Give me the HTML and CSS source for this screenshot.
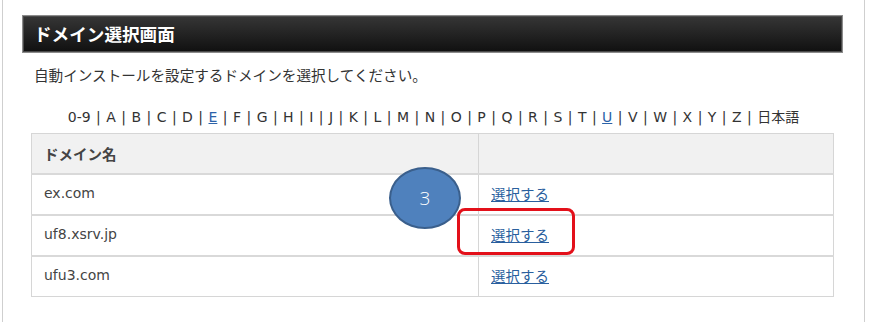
FILE: index.html
```html
<!DOCTYPE html>
<html lang="ja">
<head>
<meta charset="utf-8">
<title>ドメイン選択画面</title>
<link rel="stylesheet" href="styles.css">
</head>
<body>
<div class="panel">
  <h2 class="title-bar">ドメイン選択画面</h2>
  <p class="lead">自動インストールを設定するドメインを選択してください。</p>
  <p class="index">0-9 | A | B | C | D | <a href="#">E</a> | F | G | H | I | J | K | L | M | N | O | P | Q | R | S | T | <a href="#">U</a> | V | W | X | Y | Z | 日本語</p>
  <table class="domains">
    <thead>
      <tr><th class="col-name">ドメイン名</th><th></th></tr>
    </thead>
    <tbody>
      <tr><td>ex.com</td><td><a href="#">選択する</a></td></tr>
      <tr><td>uf8.xsrv.jp</td><td><a href="#">選択する</a></td></tr>
      <tr><td>ufu3.com</td><td><a href="#">選択する</a></td></tr>
    </tbody>
  </table>
  <div class="badge">3</div>
  <div class="highlight"></div>
</div>
</body>
</html>
```

FILE: styles.css
```css
html, body {
  margin: 0;
  padding: 0;
  background: #ffffff;
}

body {
  font-family: "DejaVu Sans", "Noto Sans CJK JP", sans-serif;
  color: #333333;
  font-size: 14px;
}

.panel {
  position: relative;
  margin-left: 2px;
  width: 863px;
  min-height: 322px;
  box-sizing: border-box;
  border-left: 1px solid #cfcfcf;
  border-right: 1px solid #cfcfcf;
  padding: 15px 0 0 0;
}

.title-bar {
  margin: 0 21px 0 19px;
  height: 38px;
  box-sizing: border-box;
  border: 1px solid #8c8c8c;
  box-shadow: inset 0 0 0 1px #4a4a4a;
  background: linear-gradient(#363636, #101010);
  color: #ffffff;
  font-family: "Noto Sans CJK JP", sans-serif;
  font-weight: bold;
  font-size: 17.6px;
  line-height: 36px;
  padding-left: 11px;
}

.lead {
  margin: 12px 0 0 31px;
  font-family: "Noto Sans CJK JP", sans-serif;
  line-height: 20px;
  font-size: 14.6px;
  color: #333333;
}

.index {
  margin: 22px 0 0 0;
  text-align: center;
  line-height: 20px;
  word-spacing: 1px;
  color: #333333;
}

.index a {
  color: #2b62a8;
  text-decoration: underline;
}

.domains {
  margin: 6px 0 0 28px;
  width: 803px;
  border-collapse: collapse;
  table-layout: fixed;
}

.domains th,
.domains td {
  border: 1px solid #d6d6d6;
  padding: 0 12px;
  text-align: left;
  height: 40px;
  box-sizing: border-box;
  color: #444444;
}

.domains th {
  background: #f1f1f1;
  font-family: "Noto Sans CJK JP", sans-serif;
  font-weight: bold;
  font-size: 14.5px;
}

.domains .col-name {
  width: 447px;
}

.domains tbody td {
  height: 41px;
  border-top: 2px solid #d9d9d9;
  padding-bottom: 2px;
}

.domains a {
  font-family: "Noto Sans CJK JP", sans-serif;
  color: #2a5f9e;
  text-decoration: underline;
  font-size: 14.5px;
}

.badge {
  position: absolute;
  left: 386px;
  top: 167px;
  width: 72px;
  height: 62px;
  box-sizing: border-box;
  border-radius: 50%;
  background: #4f81bd;
  border: 2px solid #3a5f8c;
  color: #ffffff;
  font-family: "Open Sans", sans-serif;
  font-weight: 300;
  font-size: 19px;
  display: flex;
  align-items: center;
  justify-content: center;
}

.highlight {
  position: absolute;
  left: 454px;
  top: 208px;
  width: 118px;
  height: 47px;
  box-sizing: border-box;
  border: 3px solid #e3101a;
  border-radius: 8px;
}
```
